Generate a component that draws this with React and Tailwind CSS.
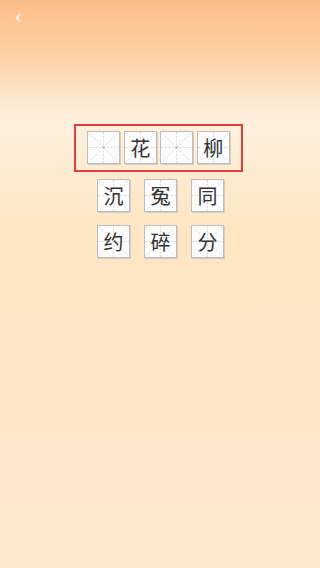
import React from "react";

const font = { fontFamily: '"Noto Sans CJK SC", "Noto Sans", sans-serif' };

function Grid({ dot }) {
  return (
    <svg className="absolute inset-0 h-full w-full" viewBox="0 0 32 32">
      <g stroke="#c9c9c9" strokeWidth="0.7" strokeDasharray="2.2 1.6" fill="none">
        <line x1="0" y1="16" x2="32" y2="16" />
        <line x1="16" y1="0" x2="16" y2="32" />
        <line x1="1" y1="1" x2="31" y2="31" />
        <line x1="31" y1="1" x2="1" y2="31" />
      </g>
      {dot && <circle cx="16" cy="16" r="1" fill="#a8a8a8" />}
    </svg>
  );
}

function Cell({ ch }) {
  return (
    <div className="relative flex h-[33px] w-[33px] items-center justify-center border border-[#bdbdbd] bg-[#fcfcfc] shadow-[1px_1px_0_#d6cec2]">
      <Grid dot={!ch} />
      {ch && (
        <span className="relative text-[20px] leading-none text-[#333]" style={font}>
          {ch}
        </span>
      )}
    </div>
  );
}

export default function App() {
  const answer = ["", "花", "", "柳"];
  const choices = [
    ["沉", "冤", "同"],
    ["约", "碎", "分"],
  ];

  return (
    <div className="min-h-[568px] w-[320px] bg-[linear-gradient(180deg,#fdbd88_0%,#fdd2a6_10%,#feecd6_19%,#fef0dd_22%,#fde6c3_40%,#fee6c8_70%,#fee9cf_100%)]">
      <div className="flex h-[38px] items-start px-[15px] pt-[13px]">
        <svg width="6" height="10" viewBox="0 0 6 10">
          <path d="M5 1 L1.5 5 L5 9" stroke="#fff" strokeWidth="1.4" fill="none" />
        </svg>
      </div>

      <div className="mt-[86px] flex flex-col items-center">
        <div className="ml-[-3px] flex gap-[3.5px] border-2 border-[#e53c3c] px-[11.5px] pt-[5px] pb-[6px]">
          {answer.map((c, i) => (
            <Cell key={i} ch={c} />
          ))}
        </div>

        <div className="mt-[7px] flex flex-col gap-[13px] pl-[1px]">
          {choices.map((row, i) => (
            <div key={i} className="flex gap-[14px]">
              {row.map((c) => (
                <Cell key={c} ch={c} />
              ))}
            </div>
          ))}
        </div>
      </div>
    </div>
  );
}
